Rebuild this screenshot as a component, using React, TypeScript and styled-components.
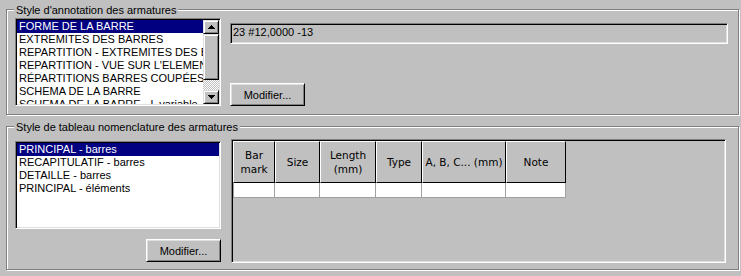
import React from 'react';
import styled, { createGlobalStyle } from 'styled-components';

const Global = createGlobalStyle`
  html, body { margin: 0; padding: 0; background: #c0c0c0; }
  body {
    font-family: "Liberation Sans", Arial, sans-serif;
    font-size: 11px;
    color: #000;
  }
`;

const Dialog = styled.div`
  width: 741px;
  height: 276px;
  box-sizing: border-box;
  padding: 9px 2px 0 6px;
  display: flex;
  flex-direction: column;
`;

const Group = styled.section<{ $h: number; $mt?: number; $pad: string }>`
  position: relative;
  box-sizing: border-box;
  height: ${(p) => p.$h}px;
  margin-top: ${(p) => p.$mt ?? 0}px;
  padding: ${(p) => p.$pad};
  border: 1px solid #808080;
  box-shadow: inset 1px 1px 0 #fff, 1px 1px 0 #fff;
  display: flex;
  align-items: flex-start;
`;

const GroupTitle = styled.div`
  position: absolute;
  top: -6px;
  left: 7px;
  padding: 0 2px;
  line-height: 13px;
  background: #c0c0c0;
  white-space: nowrap;
`;

const ListBox = styled.div<{ $h: number; $mt?: number }>`
  box-sizing: border-box;
  width: 206px;
  height: ${(p) => p.$h}px;
  margin-top: ${(p) => p.$mt ?? 0}px;
  border: 1px solid;
  border-color: #808080 #fff #fff #808080;
  box-shadow: inset 1px 1px 0 #000, inset -1px -1px 0 #dfdfdf;
  padding: 1px;
  display: flex;
  overflow: hidden;
  flex-shrink: 0;
`;

const Items = styled.div`
  flex: 1;
  min-width: 0;
  background: #fff;
  overflow: hidden;
`;

const Item = styled.div<{ $sel?: boolean }>`
  height: 13px;
  line-height: 13px;
  padding-left: 2px;
  white-space: nowrap;
  overflow: hidden;
  background: ${(p) => (p.$sel ? '#000080' : 'transparent')};
  color: ${(p) => (p.$sel ? '#fff' : '#000')};
`;

const ScrollBar = styled.div`
  width: 16px;
  display: flex;
  flex-direction: column;
  flex-shrink: 0;
`;

const Raised = styled.div<{ $h: number }>`
  box-sizing: border-box;
  height: ${(p) => p.$h}px;
  background: #c0c0c0;
  border: 1px solid;
  border-color: #dfdfdf #000 #000 #dfdfdf;
  box-shadow: inset 1px 1px 0 #fff, inset -1px -1px 0 #808080;
  display: flex;
  align-items: center;
  justify-content: center;
  flex-shrink: 0;
`;

const Track = styled.div`
  flex: 1;
  background-color: #c0c0c0;
  background-image: repeating-conic-gradient(#fff 0 25%, #c0c0c0 0 50%);
  background-size: 2px 2px;
`;

const RightCol = styled.div`
  flex: 1;
  margin-left: 9px;
  height: 88px;
  display: flex;
  flex-direction: column;
  justify-content: space-between;
  align-items: flex-start;
`;

const TextField = styled.div`
  box-sizing: border-box;
  align-self: stretch;
  margin-top: 5px;
  height: 21px;
  border: 1px solid;
  border-color: #808080 #fff #fff #808080;
  box-shadow: inset 1px 1px 0 #000, inset -1px -1px 0 #dfdfdf;
  padding: 1px 2px;
  line-height: 14px;
  background: #c0c0c0;
  white-space: nowrap;
`;

const Button = styled.button`
  box-sizing: border-box;
  width: 75px;
  height: 23px;
  padding: 0;
  margin: 0;
  font: inherit;
  color: #000;
  background: #c0c0c0;
  border: 1px solid;
  border-color: #fff #000 #000 #fff;
  box-shadow: inset 1px 1px 0 #dfdfdf, inset -1px -1px 0 #808080;
  border-radius: 0;
  flex-shrink: 0;
`;

const LeftCol = styled.div`
  width: 206px;
  display: flex;
  flex-direction: column;
  align-items: flex-end;
  flex-shrink: 0;
`;

const Panel = styled.div`
  box-sizing: border-box;
  flex: 1;
  margin-left: 10px;
  align-self: stretch;
  border: 1px solid;
  border-color: #808080 #fff #fff #808080;
  box-shadow: inset 1px 1px 0 #000, inset -1px -1px 0 #dfdfdf;
  padding: 1px;
  background: #c0c0c0;
`;

const Grid = styled.table`
  border-collapse: separate;
  border-spacing: 0;
  table-layout: fixed;
  font-family: "DejaVu Sans", Tahoma, sans-serif;
  font-size: 10.5px;
  color: #000;
`;

const HeadCell = styled.th<{ $w: number }>`
  box-sizing: border-box;
  width: ${(p) => p.$w}px;
  height: 42px;
  padding: 0;
  font-weight: normal;
  line-height: 14px;
  text-align: center;
  vertical-align: middle;
  white-space: nowrap;
  background: #c0c0c0;
  border: 1px solid;
  border-color: #fff #000 #000 #fff;
`;

const DataCell = styled.td<{ $first?: boolean }>`
  box-sizing: border-box;
  height: 15px;
  padding: 0;
  background: #fff;
  border-right: 1px solid #a0a0a0;
  border-bottom: 1px solid #a0a0a0;
  border-left: ${(p) => (p.$first ? '1px solid #a0a0a0' : 'none')};
`;

const Arrow = ({ up }: { up?: boolean }) => (
  <svg width="7" height="4" viewBox="0 0 7 4" shapeRendering="crispEdges">
    {up ? (
      <path d="M3 0h1v1h1v1h1v1h1v1H0V3h1V2h1V1h1z" fill="#000" />
    ) : (
      <path d="M0 0h7v1H6v1H5v1H4v1H3V3H2V2H1V1H0z" fill="#000" />
    )}
  </svg>
);

const annotationStyles = [
  'FORME DE LA BARRE',
  'EXTREMITES DES BARRES',
  'REPARTITION - EXTREMITES DES BARRES',
  "REPARTITION - VUE SUR L'ELEMENT",
  'RÉPARTITIONS BARRES COUPÉES',
  'SCHEMA DE LA BARRE',
  'SCHEMA DE LA BARRE - L variable',
];

const tableStyles = [
  'PRINCIPAL - barres',
  'RECAPITULATIF - barres',
  'DETAILLE - barres',
  'PRINCIPAL - éléments',
];

const columns: { label: string[]; w: number }[] = [
  { label: ['Bar', 'mark'], w: 42 },
  { label: ['Size'], w: 45 },
  { label: ['Length', '(mm)'], w: 56 },
  { label: ['Type'], w: 46 },
  { label: ['A, B, C... (mm)'], w: 84 },
  { label: ['Note'], w: 60 },
];

export default function App() {
  return (
    <>
      <Global />
      <Dialog>
        <Group $h={106} $pad="8px 10px 0 8px">
          <GroupTitle>Style d'annotation des armatures</GroupTitle>
          <ListBox $h={88}>
            <Items>
              {annotationStyles.map((s, i) => (
                <Item key={s} $sel={i === 0}>
                  {s}
                </Item>
              ))}
            </Items>
            <ScrollBar>
              <Raised $h={14}>
                <Arrow up />
              </Raised>
              <Raised $h={46} />
              <Track />
              <Raised $h={14}>
                <Arrow />
              </Raised>
            </ScrollBar>
          </ListBox>
          <RightCol>
            <TextField>23 #12,0000 -13</TextField>
            <Button>Modifier...</Button>
          </RightCol>
        </Group>

        <Group $h={144} $mt={11} $pad="12px 12px 6px 8px">
          <GroupTitle>Style de tableau nomenclature des armatures</GroupTitle>
          <LeftCol>
            <ListBox $h={88} $mt={2}>
              <Items>
                {tableStyles.map((s, i) => (
                  <Item key={s} $sel={i === 0}>
                    {s}
                  </Item>
                ))}
              </Items>
            </ListBox>
            <Button style={{ marginTop: 10 }}>Modifier...</Button>
          </LeftCol>
          <Panel>
            <Grid>
              <thead>
                <tr>
                  {columns.map((c) => (
                    <HeadCell key={c.label.join(' ')} $w={c.w}>
                      {c.label.map((l, i) => (
                        <React.Fragment key={l}>
                          {i > 0 && <br />}
                          {l}
                        </React.Fragment>
                      ))}
                    </HeadCell>
                  ))}
                </tr>
              </thead>
              <tbody>
                <tr>
                  {columns.map((c, i) => (
                    <DataCell key={c.label.join(' ')} $first={i === 0} />
                  ))}
                </tr>
              </tbody>
            </Grid>
          </Panel>
        </Group>
      </Dialog>
    </>
  );
}
